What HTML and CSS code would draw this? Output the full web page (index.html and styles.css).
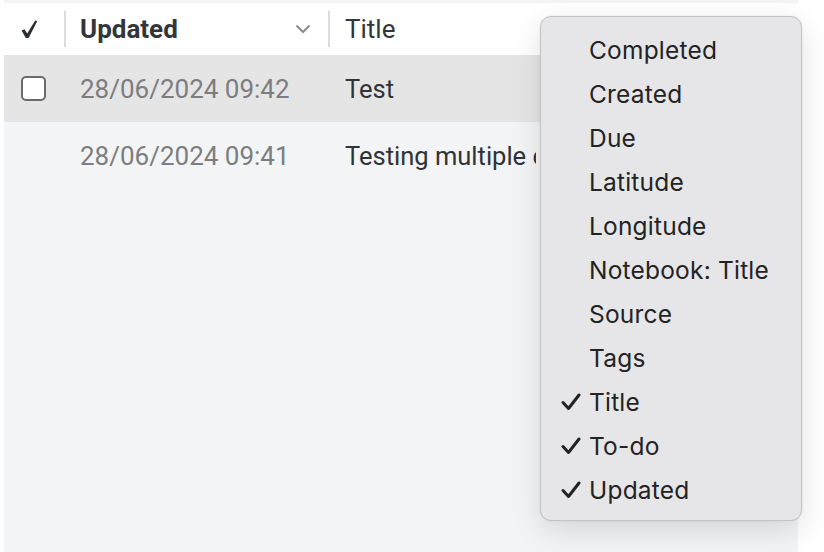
FILE: index.html
```html
<!DOCTYPE html>
<html>
<head>
<meta charset="utf-8">
<link rel="stylesheet" href="styles.css">
</head>
<body>
<div class="app">
  <div class="table">
    <div class="header">
      <div class="cell cell-check">
        <svg class="head-check" width="17" height="19" viewBox="0 0 17 19"><path d="M0.6 10.6 L3.4 9.2 L6.2 13.4 L14.2 0.6 L16.2 1.2 L7.6 18 L4.8 18 Z" fill="#2b2f33"/></svg>
      </div>
      <div class="sep"></div>
      <div class="cell cell-updated head-updated">
        <span class="head-label bold">Updated</span>
        <svg class="chev" width="16" height="10" viewBox="0 0 16 10"><path d="M1.5 1.5 L8 8 L14.5 1.5" fill="none" stroke="#8a8c8f" stroke-width="2"/></svg>
      </div>
      <div class="sep"></div>
      <div class="cell cell-title head-label">Title</div>
    </div>
    <div class="row selected">
      <div class="cell cell-check"><span class="checkbox"></span></div>
      <div class="cell cell-updated date">28/06/2024 09:42</div>
      <div class="cell cell-title title">Test</div>
    </div>
    <div class="row">
      <div class="cell cell-check"></div>
      <div class="cell cell-updated date">28/06/2024 09:41</div>
      <div class="cell cell-title title">Testing multiple checkboxes</div>
    </div>
  </div>

  <div class="menu">
    <div class="item"><span class="mark"></span>Completed</div>
    <div class="item"><span class="mark"></span>Created</div>
    <div class="item"><span class="mark"></span>Due</div>
    <div class="item"><span class="mark"></span>Latitude</div>
    <div class="item"><span class="mark"></span>Longitude</div>
    <div class="item"><span class="mark"></span>Notebook: Title</div>
    <div class="item"><span class="mark"></span>Source</div>
    <div class="item"><span class="mark"></span>Tags</div>
    <div class="item"><span class="mark"><svg width="20" height="18" viewBox="0 0 20 18"><path d="M2 9.5 L7.5 15.5 L18 2" fill="none" stroke="#222" stroke-width="3" stroke-linecap="round" stroke-linejoin="round"/></svg></span>Title</div>
    <div class="item"><span class="mark"><svg width="20" height="18" viewBox="0 0 20 18"><path d="M2 9.5 L7.5 15.5 L18 2" fill="none" stroke="#222" stroke-width="3" stroke-linecap="round" stroke-linejoin="round"/></svg></span>To-do</div>
    <div class="item"><span class="mark"><svg width="20" height="18" viewBox="0 0 20 18"><path d="M2 9.5 L7.5 15.5 L18 2" fill="none" stroke="#222" stroke-width="3" stroke-linecap="round" stroke-linejoin="round"/></svg></span>Updated</div>
  </div>
</div>
</body>
</html>
```

FILE: styles.css
```css
html, body {
  margin: 0;
  padding: 0;
  background: #ffffff;
}

.app {
  position: relative;
  margin-left: 4px;
  width: 794px;
  height: 552px;
  background: #f3f4f6;
  padding-top: 3px;
  box-sizing: border-box;
  font-family: Roboto, "Liberation Sans", sans-serif;
}

.table {
  display: flex;
  flex-direction: column;
}

.header {
  display: flex;
  align-items: center;
  height: 52px;
  background: #ffffff;
}

.row {
  display: flex;
  align-items: center;
  height: 67px;
}

.row.selected {
  background: #e5e5e6;
}

.cell {
  display: flex;
  align-items: center;
  box-sizing: border-box;
}

.cell-check {
  width: 60px;
  padding-left: 17px;
}

.head-check {
  display: block;
  margin-top: 1px;
}

.sep {
  width: 2px;
  height: 36px;
  background: #dcdcdc;
}

.cell-updated {
  width: 262px;
  padding-left: 14px;
}

.row .cell-updated {
  width: 266px;
  padding-left: 16px;
}

.head-updated {
  justify-content: space-between;
  padding-right: 17px;
}

.cell-title {
  padding-left: 15px;
  white-space: nowrap;
  overflow: hidden;
}

.row .cell-title {
  width: 206px;
}

.head-label {
  font-size: 26px;
  color: #32363b;
}

.bold {
  font-weight: 700;
}

.chev {
  display: block;
}

.checkbox {
  display: block;
  width: 25px;
  height: 25px;
  box-sizing: border-box;
  border: 2px solid #6b6b6b;
  border-radius: 5px;
  background: #ffffff;
}

.date {
  font-size: 26px;
  color: #7c7d80;
}

.title {
  font-size: 25.5px;
  color: #2f3338;
}

.menu {
  position: absolute;
  left: 536px;
  top: 16px;
  width: 262px;
  height: 505px;
  box-sizing: border-box;
  padding: 11px 0 10px 0;
  background: #e6e6e8;
  border: 1px solid #c3c3c5;
  border-radius: 11px;
  box-shadow: 0 10px 30px rgba(0, 0, 0, 0.12), 0 0 2px rgba(0, 0, 0, 0.08);
  font-family: Inter, "Noto Sans", sans-serif;
}

.item {
  display: flex;
  align-items: center;
  height: 44px;
  font-size: 24.5px;
  color: #232323;
  letter-spacing: 0.2px;
}

.mark {
  display: flex;
  align-items: center;
  width: 48px;
  padding-left: 20px;
  box-sizing: border-box;
}

.mark svg {
  display: block;
}
```
